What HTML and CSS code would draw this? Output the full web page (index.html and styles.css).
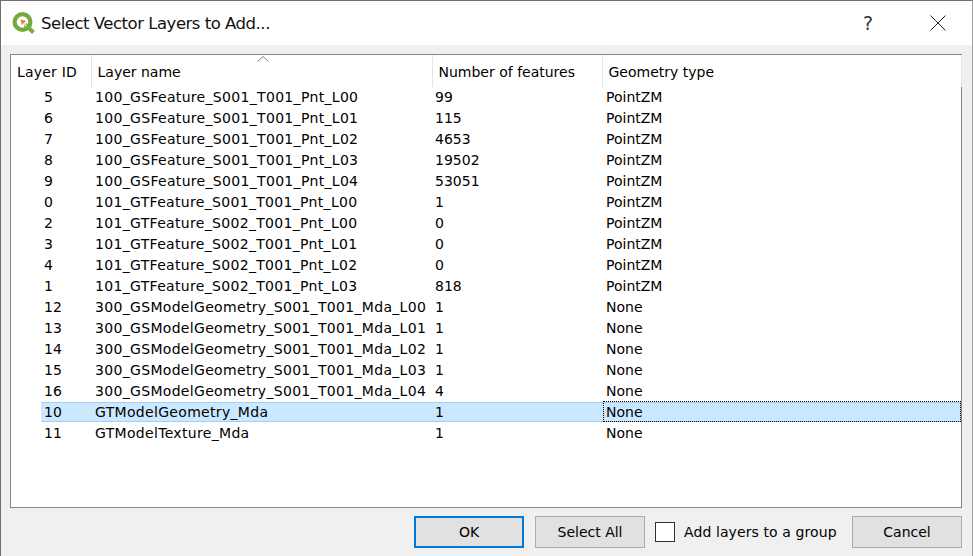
FILE: index.html
```html
<!DOCTYPE html>
<html lang="en">
<head>
<meta charset="utf-8">
<title>Select Vector Layers to Add...</title>
<link rel="stylesheet" href="styles.css">
</head>
<body>
<div class="dialog">
  <header class="titlebar">
    <svg class="logo" viewBox="0 0 24 24" width="24" height="24" aria-hidden="true">
      <circle cx="10.5" cy="11" r="7.9" fill="none" stroke="#73a93a" stroke-width="4.2"/>
      <path d="M13 13.5 L21.5 21.5" stroke="#79ad3e" stroke-width="4" fill="none"/>
      <path d="M8.5 8.5 L14 10 L10 14 Z" fill="#ee7a2c"/>
      <path d="M11.5 12 L14.5 15" stroke="#e4e0d4" stroke-width="1.6" fill="none"/>
    </svg>
    <span class="title">Select Vector Layers to Add...</span>
    <span class="help">?</span>
    <svg class="close" viewBox="0 0 16 16" width="16" height="16" aria-hidden="true">
      <path d="M0.5 0.5 L15.5 15.5 M15.5 0.5 L0.5 15.5" stroke="#222" stroke-width="1" fill="none"/>
    </svg>
  </header>
  <main class="content">
    <div class="frame">
      <svg class="sort" viewBox="0 0 12 6" width="12" height="6" aria-hidden="true">
        <path d="M0.5 5.5 L6 0.5 L11.5 5.5" stroke="#808080" fill="none"/>
      </svg>
      <table class="layers">
        <colgroup><col class="c1"><col class="c2"><col class="c3"><col class="c4"></colgroup>
        <thead>
          <tr><th class="h1">Layer ID</th><th>Layer name</th><th>Number of features</th><th>Geometry type</th></tr>
        </thead>
        <tbody>
          <tr><td class="id">5</td><td>100_GSFeature_S001_T001_Pnt_L00</td><td>99</td><td>PointZM</td></tr>
          <tr><td class="id">6</td><td>100_GSFeature_S001_T001_Pnt_L01</td><td>115</td><td>PointZM</td></tr>
          <tr><td class="id">7</td><td>100_GSFeature_S001_T001_Pnt_L02</td><td>4653</td><td>PointZM</td></tr>
          <tr><td class="id">8</td><td>100_GSFeature_S001_T001_Pnt_L03</td><td>19502</td><td>PointZM</td></tr>
          <tr><td class="id">9</td><td>100_GSFeature_S001_T001_Pnt_L04</td><td>53051</td><td>PointZM</td></tr>
          <tr><td class="id">0</td><td>101_GTFeature_S001_T001_Pnt_L00</td><td>1</td><td>PointZM</td></tr>
          <tr><td class="id">2</td><td>101_GTFeature_S002_T001_Pnt_L00</td><td>0</td><td>PointZM</td></tr>
          <tr><td class="id">3</td><td>101_GTFeature_S002_T001_Pnt_L01</td><td>0</td><td>PointZM</td></tr>
          <tr><td class="id">4</td><td>101_GTFeature_S002_T001_Pnt_L02</td><td>0</td><td>PointZM</td></tr>
          <tr><td class="id">1</td><td>101_GTFeature_S002_T001_Pnt_L03</td><td>818</td><td>PointZM</td></tr>
          <tr><td class="id">12</td><td>300_GSModelGeometry_S001_T001_Mda_L00</td><td>1</td><td>None</td></tr>
          <tr><td class="id">13</td><td>300_GSModelGeometry_S001_T001_Mda_L01</td><td>1</td><td>None</td></tr>
          <tr><td class="id">14</td><td>300_GSModelGeometry_S001_T001_Mda_L02</td><td>1</td><td>None</td></tr>
          <tr><td class="id">15</td><td>300_GSModelGeometry_S001_T001_Mda_L03</td><td>1</td><td>None</td></tr>
          <tr><td class="id">16</td><td>300_GSModelGeometry_S001_T001_Mda_L04</td><td>4</td><td>None</td></tr>
          <tr class="selected"><td class="id">10</td><td>GTModelGeometry_Mda</td><td>1</td><td class="current">None</td></tr>
          <tr><td class="id">11</td><td>GTModelTexture_Mda</td><td>1</td><td>None</td></tr>
        </tbody>
      </table>
    </div>
    <footer class="actions">
      <button class="btn default" type="button">OK</button>
      <button class="btn" type="button">Select All</button>
      <label class="check"><span class="box"></span><span>Add layers to a group</span></label>
      <button class="btn" type="button">Cancel</button>
    </footer>
  </main>
</div>
</body>
</html>
```
FILE: styles.css
```css
* { box-sizing: border-box; }
html, body { margin: 0; height: 100%; }
body {
  font-family: "DejaVu Sans", sans-serif;
  font-size: 14px;
  color: #000;
  overflow: hidden;
}
.dialog {
  width: 973px;
  height: 556px;
  display: flex;
  flex-direction: column;
  border-top: 1px solid #707070;
  border-left: 1px solid #707070;
  border-right: 1px solid #a0a0a0;
  background: #f0f0f0;
}
.titlebar {
  height: 44px;
  flex: none;
  display: flex;
  align-items: center;
  background: #fff;
  padding-left: 11px;
}
.logo { flex: none; }
.title { margin-left: 5px; font-size: 16.5px; letter-spacing: -0.48px; color: #111; }
.help { margin-left: auto; font-size: 19px; color: #333; }
.close { margin-left: 57px; margin-right: 26px; }
.content {
  flex: 1;
  display: flex;
  flex-direction: column;
  padding: 9px 10px 8px 9px;
}
.frame {
  position: relative;
  height: 454px;
  flex: none;
  border: 1px solid #828790;
  background: #fff;
}
.sort { position: absolute; left: 246px; top: 1px; }
.layers {
  table-layout: fixed;
  border-collapse: collapse;
  width: 950px;
}
.c1 { width: 80px; }
.c2 { width: 341px; }
.c3 { width: 170px; }
.c4 { width: 359px; }
th {
  height: 32px;
  padding: 1px 0 0 6px;
  font-weight: normal;
  text-align: left;
  border-right: 1px solid #e5e5e5;
  white-space: nowrap;
}
.h1 { letter-spacing: 0.2px; }
td {
  height: 21px;
  padding: 0 0 0 3px;
  letter-spacing: 0.32px;
  white-space: nowrap;
  line-height: 21px;
}
td:nth-child(2), td:nth-child(4) { padding-left: 4px; }
td:nth-child(3), td:nth-child(4) { letter-spacing: 0; }
td.id { padding-left: 33px; letter-spacing: 0; }
.selected td {
  line-height: 19px;
  background: linear-gradient(to bottom, #99d1ff 1px, #cce8ff 1px, #cce8ff 19px, #99d1ff 19px, #99d1ff 20px, transparent 20px);
}
.selected td.id { background-position: 30px 0; background-repeat: no-repeat; }
.current { position: relative; }
.current::after {
  content: "";
  position: absolute;
  top: -1px;
  right: 0;
  bottom: 1px;
  left: 1px;
  border: 1px dotted #000;
}
.actions {
  flex: 1;
  display: flex;
  align-items: flex-start;
  padding: 8px 0 0 404px;
}
.btn {
  width: 110px;
  height: 32px;
  background: #e1e1e1;
  border: 1px solid #adadad;
  font: inherit;
  color: #000;
  padding: 0;
}
.btn.default { border: 2px solid #0078d7; margin-right: 11px; }
.check { display: flex; align-items: center; height: 32px; margin: 0 14px 0 10px; gap: 9px; letter-spacing: 0.1px; width: 183px; white-space: nowrap; }
.box { width: 20px; height: 20px; border: 1px solid #333; background: #fff; flex: none; }
```
